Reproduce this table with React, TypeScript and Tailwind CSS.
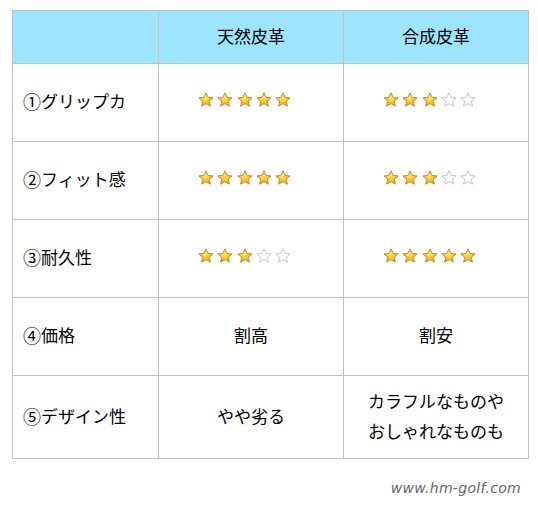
import React from "react";

const FONT = '"Noto Sans CJK JP", "Noto Sans", sans-serif';

function Star({ filled, id }: { filled: boolean; id: string }) {
  const d =
    "M8 0.8 L10.1 5.4 L15.1 5.9 L11.3 9.2 L12.4 14.2 L8 11.6 L3.6 14.2 L4.7 9.2 L0.9 5.9 L5.9 5.4 Z";
  return (
    <svg width="16" height="16" viewBox="0 0 16 16" className="block">
      <defs>
        <radialGradient id={id} cx="0.45" cy="0.35" r="0.7">
          <stop offset="0" stopColor="#ffe680" />
          <stop offset="0.5" stopColor="#fbc52a" />
          <stop offset="1" stopColor="#e99a0a" />
        </radialGradient>
      </defs>
      {filled ? (
        <path d={d} fill={`url(#${id})`} stroke="#b8862e" strokeWidth="0.9" strokeLinejoin="round" />
      ) : (
        <path d={d} fill="#ffffff" stroke="#c4c4c4" strokeWidth="1" strokeLinejoin="round" />
      )}
    </svg>
  );
}

function Stars({ n, k }: { n: number; k: string }) {
  return (
    <div className="flex items-center gap-[3.3px] mr-[13px] mt-[-2px]">
      {[0, 1, 2, 3, 4].map((i) => (
        <Star key={i} filled={i < n} id={`g-${k}-${i}`} />
      ))}
    </div>
  );
}

const rows: { num: string; label: string; a: React.ReactNode; b: React.ReactNode; tall?: boolean }[] = [
  { num: "①", label: "グリップカ", a: <Stars n={5} k="1a" />, b: <Stars n={3} k="1b" /> },
  { num: "②", label: "フィット感", a: <Stars n={5} k="2a" />, b: <Stars n={3} k="2b" /> },
  { num: "③", label: "耐久性", a: <Stars n={3} k="3a" />, b: <Stars n={5} k="3b" /> },
  { num: "④", label: "価格", a: <span>割高</span>, b: <span>割安</span> },
  {
    num: "⑤",
    label: "デザイン性",
    a: <span>やや劣る</span>,
    b: (
      <span className="text-center leading-[30px]">
        カラフルなものや
        <br />
        おしゃれなものも
      </span>
    ),
    tall: true,
  },
];

export default function App() {
  return (
    <div className="w-[538px] h-[516px] bg-white pt-[10px] pl-[12px]" style={{ fontFamily: FONT }}>
      <div className="grid grid-cols-[146px_185px_185px] w-[517px] border-l border-t border-[#c2c2c2] text-[17px] text-black">
        <div className="h-[53px] bg-[#9ce5fd] border-r border-b border-[#c2c2c2]" />
        <div className="h-[53px] bg-[#9ce5fd] border-r border-b border-[#c2c2c2] flex items-center justify-center pb-[3px]">
          天然皮革
        </div>
        <div className="h-[53px] bg-[#9ce5fd] border-r border-b border-[#c2c2c2] flex items-center justify-center pb-[3px]">
          合成皮革
        </div>
        {rows.map((r) => {
          const h = r.tall ? "h-[83px]" : "h-[78px]";
          return (
            <React.Fragment key={r.label}>
              <div className={`${h} border-r border-b border-[#c2c2c2] flex items-center pl-[10px] pb-[3px]`}>
                <span className="text-[18px] leading-none">{r.num}</span>
                <span>{r.label}</span>
              </div>
              <div className={`${h} border-r border-b border-[#c2c2c2] flex items-center justify-center pb-[3px]`}>
                {r.a}
              </div>
              <div className={`${h} border-r border-b border-[#c2c2c2] flex items-center justify-center pb-[3px]`}>
                {r.b}
              </div>
            </React.Fragment>
          );
        })}
      </div>
      <div className="w-[509px] flex justify-end mt-[19px]">
        <span
          className="text-[14px] italic text-[#666]"
          style={{ fontFamily: '"DejaVu Sans", sans-serif', letterSpacing: "0.3px" }}
        >
          www.hm-golf.com
        </span>
      </div>
    </div>
  );
}
